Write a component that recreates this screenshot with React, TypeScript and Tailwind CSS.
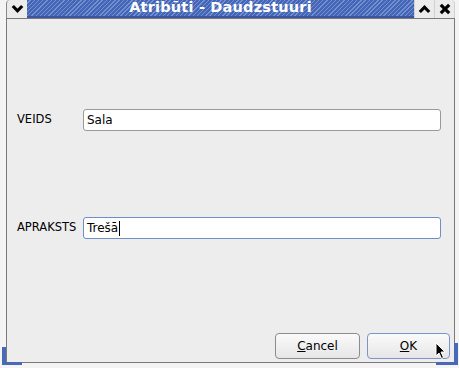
export default function App() {
  return (
    <div className="w-[459px] h-[368px] bg-[#f4f4f4] flex flex-col relative font-['DejaVu_Sans',sans-serif] text-[11.5px] text-black overflow-hidden">
      {/* Title bar */}
      <div className="flex h-[19px] ml-[6px] mr-[4px] border-b border-[#7a7a7a]">
        <div className="w-[21px] bg-[#ebebeb] border-l border-[#8a8a8a] rounded-tl-[4px] flex items-center justify-center">
          <svg width="13" height="10" viewBox="0 0 13 10">
            <path d="M1.8 2 L6.5 6.8 L11.2 2" stroke="#000" strokeWidth="3.2" fill="none" />
          </svg>
        </div>
        <div className="flex-1 flex items-center justify-center bg-[repeating-linear-gradient(135deg,#4566b6_0px,#4566b6_2px,#7390d0_2px,#7390d0_3px)] border-b-2 border-[#3a56a0]">
          <span className="text-white font-bold text-[14.5px] tracking-[0.2px] -mt-[1px]">Atribūti - Daudzstuuri</span>
        </div>
        <div className="w-[20px] bg-[#ebebeb] flex items-center justify-center border-l border-[#d0d0d0]">
          <svg width="13" height="10" viewBox="0 0 13 10">
            <path d="M1.8 8 L6.5 3.2 L11.2 8" stroke="#000" strokeWidth="3.2" fill="none" />
          </svg>
        </div>
        <div className="w-[21px] bg-[#ebebeb] flex items-center justify-center border-l border-[#d0d0d0] rounded-tr-[4px] border-r border-[#8a8a8a]">
          <svg width="12" height="12" viewBox="0 0 12 12">
            <path d="M1.8 1.8 L10.2 10.2 M10.2 1.8 L1.8 10.2" stroke="#000" strokeWidth="3.2" fill="none" />
          </svg>
        </div>
      </div>

      {/* Body */}
      <div className="flex-1 ml-[6px] mr-[4px] mb-[5px] border-l border-r border-b border-[#7a7a7a] bg-[#ededed] flex flex-col">
        <div className="flex-1 flex flex-col pl-[10px] pr-[13px]">
          <div className="h-[90px]" />
          <div className="flex items-center h-[22px]">
            <span className="w-[66px]">VEIDS</span>
            <div className="flex-1 h-[22px] bg-white border border-[#9a9a9a] rounded-[3px] flex items-center pl-[3px] text-[12px]">Sala</div>
          </div>
          <div className="h-[86px]" />
          <div className="flex items-center h-[22px]">
            <span className="w-[66px]">APRAKSTS</span>
            <div className="flex-1 h-[22px] bg-white border border-[#6f8fc4] rounded-[3px] flex items-center pl-[3px] text-[12px]">
              Trešā<span className="inline-block w-[1px] h-[15px] bg-black ml-[1px]" />
            </div>
          </div>
        </div>
        <div className="flex justify-end gap-[7px] pr-[4px] pb-[3px]">
          <button className="w-[85px] h-[26px] rounded-[4px] border border-[#8c8c8c] bg-[linear-gradient(#fafafa,#e6e6e6)] text-[12px]">
            <span className="underline">C</span>ancel
          </button>
          <button className="w-[83px] h-[26px] rounded-[4px] border border-[#7c95c8] bg-[linear-gradient(#fafafa,#e6e6e6)] text-[12px]">
            <span className="underline">O</span>K
          </button>
        </div>
      </div>

      {/* corner accents */}
      <div className="absolute left-[2px] bottom-[3px] w-[4px] h-[18px] bg-[#4a68b8]" />
      <div className="absolute left-[2px] bottom-[3px] w-[20px] h-[3px] bg-[#4a68b8]" />
      <div className="absolute right-[1px] bottom-[3px] w-[4px] h-[22px] bg-[#4a68b8]" />
      <div className="absolute right-[1px] bottom-[3px] w-[22px] h-[3px] bg-[#4a68b8]" />

      {/* cursor */}
      <svg className="absolute left-[435px] top-[342px]" width="12" height="18" viewBox="0 0 12 18">
        <path d="M1 1 L1 14 L4 11 L6.5 16.5 L8.5 15.5 L6 10 L10 10 Z" fill="#000" stroke="#fff" strokeWidth="1" />
      </svg>
    </div>
  )
}
